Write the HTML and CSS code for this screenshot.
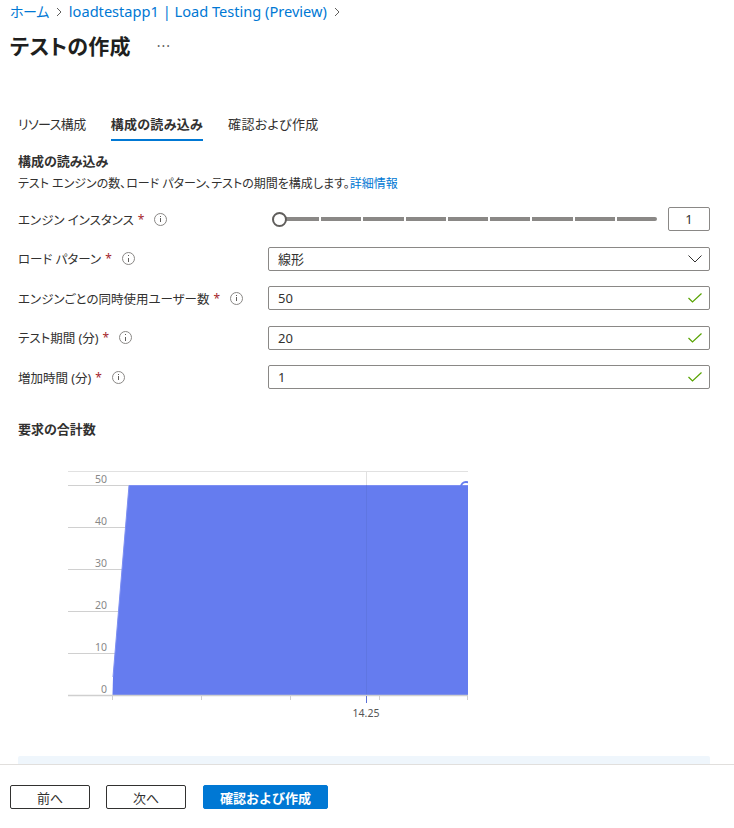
FILE: index.html
```html
<!DOCTYPE html>
<html lang="ja">
<head>
  <meta charset="UTF-8"/>
  <title>テストの作成</title>
  <link rel="stylesheet" href="styles.css">
</head>
<body>
  <div class="page">
    <div class="scroll">
      <header class="top">
        <nav class="crumbs">
          <a>ホーム</a>
          <svg class="chev" width="8" height="10" viewBox="0 0 8 10"><path d="M2 1 L6 5 L2 9" fill="none" stroke="#605e5c" stroke-width="1"/></svg>
          <a class="app">loadtestapp1 | Load Testing (Preview)</a>
          <svg class="chev" width="8" height="10" viewBox="0 0 8 10"><path d="M2 1 L6 5 L2 9" fill="none" stroke="#605e5c" stroke-width="1"/></svg>
        </nav>
        <div class="title-row">
          <h1>テストの作成</h1>
          <span class="more">···</span>
        </div>
      </header>

      <main class="content">
        <div class="tabs">
          <span class="tab first">リソース構成</span>
          <span class="tab active">構成の読み込み</span>
          <span class="tab">確認および作成</span>
        </div>

        <h2 class="section">構成の読み込み</h2>
        <p class="desc">テスト エンジンの数、ロード パターン、テストの期間を構成します。<a>詳細情報</a></p>

        <div class="form">
          <div class="row">
            <label>エンジン インスタンス<span class="req">*</span><i class="info"></i></label>
            <div class="ctrl">
              <div class="slider">
                <span class="thumb"></span>
                <span class="seg"></span><span class="seg"></span><span class="seg"></span>
                <span class="seg"></span><span class="seg"></span><span class="seg"></span>
                <span class="seg"></span><span class="seg"></span><span class="seg"></span>
              </div>
              <div class="numbox">1</div>
            </div>
          </div>
          <div class="row">
            <label>ロード パターン<span class="req">*</span><i class="info"></i></label>
            <div class="ctrl">
              <div class="field">線形
                <svg width="14" height="8" viewBox="0 0 14 8"><path d="M0.5 0.5 L7 7 L13.5 0.5" fill="none" stroke="#323130" stroke-width="1"/></svg>
              </div>
            </div>
          </div>
          <div class="row">
            <label>エンジンごとの同時使用ユーザー数<span class="req">*</span><i class="info"></i></label>
            <div class="ctrl">
              <div class="field">50<svg class="ok" width="14" height="10" viewBox="0 0 14 10"><path d="M0.5 5 L4.5 9 L13.5 0.5" fill="none" stroke="#57a300" stroke-width="1.2"/></svg></div>
            </div>
          </div>
          <div class="row">
            <label>テスト期間 (分)<span class="req">*</span><i class="info"></i></label>
            <div class="ctrl">
              <div class="field">20<svg class="ok" width="14" height="10" viewBox="0 0 14 10"><path d="M0.5 5 L4.5 9 L13.5 0.5" fill="none" stroke="#57a300" stroke-width="1.2"/></svg></div>
            </div>
          </div>
          <div class="row">
            <label>増加時間 (分)<span class="req">*</span><i class="info"></i></label>
            <div class="ctrl">
              <div class="field">1<svg class="ok" width="14" height="10" viewBox="0 0 14 10"><path d="M0.5 5 L4.5 9 L13.5 0.5" fill="none" stroke="#57a300" stroke-width="1.2"/></svg></div>
            </div>
          </div>
        </div>

        <h2 class="section chart-title">要求の合計数</h2>

        <svg class="chart" width="420" height="260" viewBox="0 0 420 260">
          <defs>
            <clipPath id="plot"><rect x="0" y="0" width="408" height="260"/></clipPath>
          </defs>
          <g stroke="#e1e1e1" stroke-width="1">
            <line x1="8" y1="6.5" x2="408" y2="6.5"/>
            <line x1="306.5" y1="6" x2="306.5" y2="230"/>
          </g>
          <g stroke="#d0d0d0" stroke-width="1">
            <line x1="8" y1="20.5" x2="408" y2="20.5"/>
            <line x1="8" y1="62.5" x2="408" y2="62.5"/>
            <line x1="8" y1="104.5" x2="408" y2="104.5"/>
            <line x1="8" y1="146.5" x2="408" y2="146.5"/>
            <line x1="8" y1="188.5" x2="408" y2="188.5"/>
          </g>
          <g class="ylab" text-anchor="end">
            <text x="47" y="18">50</text>
            <text x="47" y="60">40</text>
            <text x="47" y="102">30</text>
            <text x="47" y="144">20</text>
            <text x="47" y="186">10</text>
            <text x="47" y="228">0</text>
          </g>
          <path d="M52.5 230 L53 212 L69 20 L408 20 L408 230 Z" fill="#657cef"/>
          <path d="M53 212 L69 20.5 L408 20.5" fill="none" stroke="#7d8ff2" stroke-width="1"/>
          <line x1="306.5" y1="20" x2="306.5" y2="230" stroke="#5a6fd6" stroke-opacity="0.5" stroke-width="1"/>
          <circle cx="406" cy="22" r="5" fill="none" stroke="#657cef" stroke-width="2" clip-path="url(#plot)"/>
          <line x1="8" y1="230.5" x2="408" y2="230.5" stroke="#cfcfcf" stroke-width="1.5"/>
          <g stroke="#cfcfcf" stroke-width="1">
            <line x1="52.5" y1="231" x2="52.5" y2="235"/>
            <line x1="141.5" y1="231" x2="141.5" y2="235"/>
            <line x1="230.5" y1="231" x2="230.5" y2="235"/>
            <line x1="319.5" y1="231" x2="319.5" y2="235"/>
            <line x1="407.5" y1="231" x2="407.5" y2="235"/>
          </g>
          <line x1="306.5" y1="231" x2="306.5" y2="238" stroke="#5a6fd6" stroke-width="1"/>
          <text class="xlab" x="306" y="252" text-anchor="middle">14.25</text>
        </svg>

        <div class="notice"></div>
      </main>
    </div>

    <footer class="actions">
      <button class="btn">前へ</button>
      <button class="btn">次へ</button>
      <button class="btn primary">確認および作成</button>
    </footer>
  </div>
</body>
</html>
```

FILE: styles.css
```css
/* RESET */
* { box-sizing:border-box; margin:0; padding:0 }
html, body {
  background:#fff;
  color:#323130;
  font-family:"Segoe UI","Noto Sans","Noto Sans CJK JP",sans-serif;
  font-feature-settings:"palt";
  font-size:13px;
  overflow:hidden;
}

/* LAYOUT */
.page {
  height:828px;
  display:flex;
  flex-direction:column;
}
.scroll {
  flex:1;
  overflow:hidden;
}

/* HEADER */
.top { padding:0 10px; }
.crumbs {
  display:flex;
  align-items:center;
  gap:6px;
  height:22px;
  font-size:14px;
  color:#0078d4;
}
.crumbs a { color:#0078d4; letter-spacing:-0.4px; }
.crumbs a.app { font-size:14.6px; letter-spacing:0; }
.chev { margin-top:1px; }
.title-row {
  display:flex;
  align-items:center;
  margin-top:9px;
  height:28px;
}
.title-row h1 {
  font-size:21px;
  font-weight:700;
  letter-spacing:0.2px;
  color:#201f1e;
}
.more {
  margin-left:26px;
  font-size:14px;
  color:#605e5c;
  letter-spacing:1px;
}

/* CONTENT */
.content { padding:0 24px 0 18px; }

.tabs {
  display:flex;
  gap:25px;
  margin-top:55px;
}
.tab {
  line-height:20px;
  padding-bottom:5px;
  border-bottom:2px solid transparent;
  font-size:13px;
  letter-spacing:0.3px;
}
.tab.first { letter-spacing:-0.6px; }
.tab.active {
  font-weight:700;
  border-bottom-color:#0078d4;
}

.section {
  margin-top:11px;
  font-size:13px;
  font-weight:700;
  line-height:18px;
}
.desc {
  margin-top:5px;
  line-height:18px;
  font-size:12px;
}
.desc a { color:#0078d4; }

/* FORM */
.form {
  display:flex;
  flex-direction:column;
  gap:15.5px;
  margin-top:14px;
}
.row {
  display:grid;
  grid-template-columns:250px 1fr;
  align-items:center;
  height:24px;
}
.row label {
  display:flex;
  align-items:center;
  font-size:12.5px;
}
.req {
  color:#a4262c;
  margin-left:4px;
  font-size:12px;
}
.info {
  display:inline-block;
  position:relative;
  width:13px;
  height:13px;
  margin-left:10px;
  border:1px solid #8a8886;
  border-radius:50%;
}
.info::before {
  content:"";
  position:absolute;
  left:5px; top:2px;
  width:1px; height:1px;
  background:#605e5c;
}
.info::after {
  content:"";
  position:absolute;
  left:5px; top:4.5px;
  width:1px; height:4px;
  background:#605e5c;
}

.ctrl { display:flex; align-items:center; }
.field {
  flex:1;
  height:24px;
  display:flex;
  align-items:center;
  justify-content:space-between;
  padding:0 6px 0 9px;
  border:1px solid #8a8886;
  border-radius:2px;
  font-size:13px;
}
.field svg { margin-right:1px; }

/* SLIDER */
.slider {
  position:relative;
  flex:1;
  display:flex;
  gap:2px;
  padding:0 11px;
  height:24px;
  align-items:center;
}
.seg {
  flex:1;
  height:4px;
  background:#8a8886;
}
.seg:first-of-type { border-radius:2px 0 0 2px; }
.seg:last-child { border-radius:0 2px 2px 0; }
.thumb {
  position:absolute;
  left:4px; top:4.5px;
  width:15px; height:15px;
  border:2px solid #605e5c;
  border-radius:50%;
  background:#fff;
  z-index:1;
}
.numbox {
  width:42px;
  height:24px;
  display:flex;
  align-items:center;
  justify-content:center;
  border:1px solid #8a8886;
  border-radius:2px;
}

/* CHART */
.chart-title { margin-top:31px; }
.chart {
  display:block;
  margin:27px 0 0 42px;
  font-family:"Noto Sans",sans-serif;
}
.ylab text { font-size:10.5px; fill:#888; }
.xlab { font-size:10.5px; fill:#555; }

.notice {
  margin-top:31px;
  height:60px;
  background:#eff6fc;
  border-radius:2px;
}

/* FOOTER */
.actions {
  height:64px;
  flex:none;
  border-top:1px solid #e1dfdd;
  padding:20px 10px 0;
  display:flex;
  align-items:flex-start;
  gap:16px;
}
.btn {
  width:80px;
  height:24px;
  border:1px solid #323130;
  border-radius:2px;
  background:#fff;
  font-family:inherit;
  font-size:13px;
  color:#323130;
}
.btn.primary {
  width:125px;
  margin-left:1px;
  background:#0078d4;
  border-color:#0078d4;
  color:#fff;
  font-weight:700;
}
```
